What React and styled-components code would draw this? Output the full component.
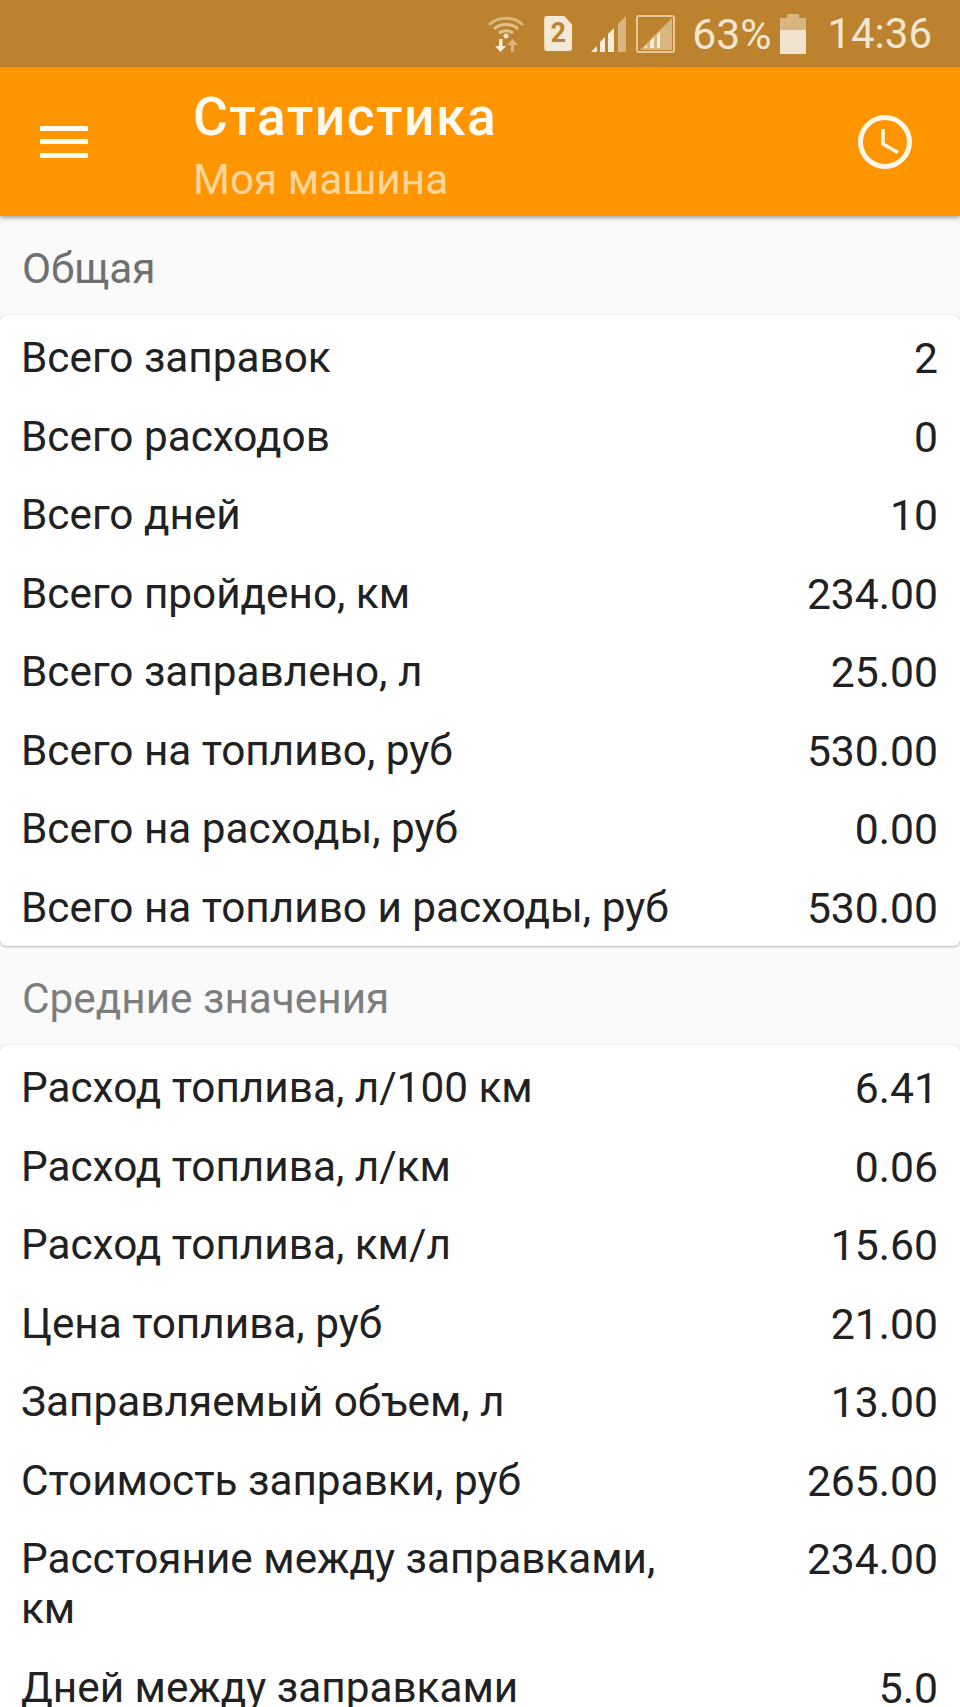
import styled, { createGlobalStyle } from "styled-components";

const totals = [
  ["Всего заправок", "2"],
  ["Всего расходов", "0"],
  ["Всего дней", "10"],
  ["Всего пройдено, км", "234.00"],
  ["Всего заправлено, л", "25.00"],
  ["Всего на топливо, руб", "530.00"],
  ["Всего на расходы, руб", "0.00"],
  ["Всего на топливо и расходы, руб", "530.00"],
];

const averages = [
  ["Расход топлива, л/100 км", "6.41"],
  ["Расход топлива, л/км", "0.06"],
  ["Расход топлива, км/л", "15.60"],
  ["Цена топлива, руб", "21.00"],
  ["Заправляемый объем, л", "13.00"],
  ["Стоимость заправки, руб", "265.00"],
  ["Расстояние между заправками, км", "234.00"],
  ["Дней между заправками", "5.0"],
];

function App() {
  return (
    <Page>
      <GlobalStyle />
      <StatusBar>
        <WifiIcon />
        <SimShape>2</SimShape>
        <SignalIcon />
        <BoxedSignalIcon />
        <Percent>63%</Percent>
        <BatteryIcon />
        <Time>14:36</Time>
      </StatusBar>
      <Toolbar>
        <MenuButton>
          <span />
          <span />
          <span />
        </MenuButton>
        <Titles>
          <Title>Статистика</Title>
          <Subtitle>Моя машина</Subtitle>
        </Titles>
        <ClockIcon />
      </Toolbar>
      <SectionTitle>Общая</SectionTitle>
      <StatsCard rows={totals} />
      <SectionTitle $light>Средние значения</SectionTitle>
      <StatsCard rows={averages} />
    </Page>
  );
}

function StatsCard({ rows }) {
  return (
    <Card>
      {rows.map(([label, value]) => (
        <Row key={label}>
          <Label>{label}</Label>
          <Value>{value}</Value>
        </Row>
      ))}
    </Card>
  );
}

function WifiIcon() {
  return (
    <StatusSvg width="36" height="36" viewBox="0 0 36 36">
      <g fill="none" stroke="#e0c391" strokeWidth="3">
        <path d="M1 9 C10 0 26 0 35 9" opacity="0.8" />
        <path d="M6 13 C12 7 24 7 30 13" />
        <path d="M11 17 C15 14 21 14 25 17" />
      </g>
      <circle cx="18" cy="20" r="2.500" fill="#f0e4cc" />
      <path d="M11 23h3.500v7H18l-5.500 6-5.500-6h4z" fill="#f5ecdc" />
      <path d="M23 36v-7h-4l5.500-6 5.500 6h-4v7z" fill="#d9b57f" />
    </StatusSvg>
  );
}

function SignalIcon() {
  return (
    <StatusSvg $gap={19} width="35" height="36" viewBox="0 0 35 36">
      <path d="M0 36l6-6v6z" fill="#f5ecdc" />
      <path d="M9 36V26l5-5v15z" fill="#f5ecdc" />
      <path d="M17 36V18l6-6v24z" fill="#f5ecdc" />
      <path d="M27 36V8l8-8v36z" fill="#d9b57f" />
    </StatusSvg>
  );
}

function BoxedSignalIcon() {
  return (
    <StatusSvg $gap={10} width="39" height="38" viewBox="0 0 39 38">
      <rect x="1" y="1" width="37" height="36" rx="2" fill="none" stroke="#e3c89c" strokeWidth="2" />
      <path d="M36 3v32H4z" fill="#d9b57f" />
      <path d="M8 33l3-3v3zM14 33v-7l4-4v11zM21 33V20l3-3v16z" fill="#f5ecdc" />
    </StatusSvg>
  );
}

function BatteryIcon() {
  return (
    <StatusSvg $gap={9} width="26" height="40" viewBox="0 0 26 40">
      <path d="M0 4h7V0h12v4h7v13H0z" fill="#d9b57f" />
      <rect y="16" width="26" height="24" fill="#efe3cd" />
    </StatusSvg>
  );
}

function ClockIcon() {
  return (
    <ClockSvg width="54" height="54" viewBox="0 0 54 54">
      <circle cx="27" cy="27" r="24.500" fill="none" stroke="#fff8ea" strokeWidth="5" />
      <path d="M25 14v15l15 8.500" fill="none" stroke="#fff8ea" strokeWidth="3.500" />
    </ClockSvg>
  );
}

const GlobalStyle = createGlobalStyle`
  html, body {
    margin: 0;
    padding: 0;
    background: #fafafa;
  }
`;

const Page = styled.div`
  width: 960px;
  height: 1707px;
  overflow: hidden;
  background: #fafafa;
  font-family: Roboto, "Noto Sans", sans-serif;
`;

const StatusBar = styled.div`
  height: 67px;
  box-sizing: border-box;
  padding: 0 28px 0 0;
  background: #bc822e;
  display: flex;
  align-items: center;
  justify-content: flex-end;
  color: #f3e6d0;
`;

const StatusSvg = styled.svg`
  flex: none;
  margin-left: ${({ $gap }) => $gap || 0}px;
`;

const SimShape = styled.div`
  width: 28px;
  height: 35px;
  margin-left: 20px;
  background: #f3e9d6;
  border-radius: 3px;
  clip-path: polygon(0 0, 72% 0, 100% 25%, 100% 100%, 0 100%);
  display: flex;
  align-items: center;
  justify-content: center;
  color: #bc822e;
  font-size: 27px;
  font-weight: 700;
  line-height: 1;
`;

const Percent = styled.span`
  font-size: 42.670px;
  margin-left: 17px;
`;

const Time = styled.span`
  font-size: 42px;
  margin-left: 21px;
`;

const Toolbar = styled.header`
  position: relative;
  height: 149px;
  background: #ff9500;
  display: flex;
  align-items: center;
  box-shadow: 0 2px 4px rgba(0, 0, 0, 0.35);
`;

const MenuButton = styled.div`
  width: 48px;
  margin-left: 40px;
  display: flex;
  flex-direction: column;
  gap: 8.500px;

  span {
    height: 5px;
    background: #fffaf0;
  }
`;

const Titles = styled.div`
  margin-left: 105px;
  padding-top: 8px;
  flex: 1;
`;

const Title = styled.div`
  font-size: 53.330px;
  font-weight: 500;
  letter-spacing: 1.500px;
  line-height: 60px;
  color: #fffaf0;
`;

const Subtitle = styled.div`
  font-size: 42.300px;
  line-height: 50px;
  margin-top: 8px;
  color: #ffd79c;
`;

const ClockSvg = styled.svg`
  margin-right: 48px;
`;

const SectionTitle = styled.div`
  height: 99px;
  box-sizing: border-box;
  padding: 28px 22px 0;
  font-size: 42.300px;
  line-height: 50px;
  color: ${({ $light }) => ($light ? "#7d7d7d" : "#6f6f6f")};
`;

const Card = styled.section`
  background: #fff;
  border-radius: 6px;
  padding: 4px 0 0;
  box-shadow: 0 0 1px rgba(0, 0, 0, 0.25), 0 1px 2px rgba(0, 0, 0, 0.25);
`;

const Row = styled.div`
  display: flex;
  justify-content: space-between;
  padding: 14px 22px 14.500px 21px;
  font-size: 42.300px;
  line-height: 50px;
  color: #212121;

  &:last-child {
    padding-bottom: 13.500px;
  }
`;

const Label = styled.div`
  width: 670px;
`;

const Value = styled.div`
  font-size: 42.670px;
  text-align: right;
`;

export default App;
